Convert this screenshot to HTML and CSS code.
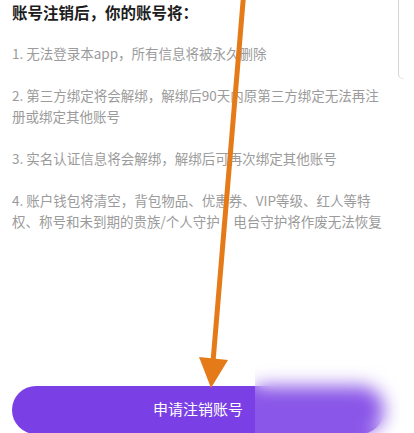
FILE: index.html
```html
<!DOCTYPE html>
<html lang="zh-CN">
<head>
<meta charset="utf-8">
<title>注销账号</title>
<link rel="stylesheet" href="styles.css">
</head>
<body>
<div class="page">
  <h1 class="title">账号注销后，你的账号将：</h1>
  <ol class="rules">
    <li>1. 无法登录本app，所有信息将被永久删除</li>
    <li>2. 第三方绑定将会解绑，解绑后90天内原第三方绑定无法再注册或绑定其他账号</li>
    <li>3. 实名认证信息将会解绑，解绑后可再次绑定其他账号</li>
    <li>4. 账户钱包将清空，背包物品、优惠券、VIP等级、红人等特权、称号和未到期的贵族/个人守护，电台守护将作废无法恢复</li>
  </ol>
  <div class="actions">
    <button class="apply-btn">申请注销账号</button>
  </div>
</div>
<div class="edge-line"></div>
<div class="blur-patch"></div>
<svg class="arrow" width="414" height="433" viewBox="0 0 414 433">
  <line x1="243.5" y1="-4" x2="213" y2="362" stroke="#e47b18" stroke-width="5"/>
  <polygon points="199,357 228,360 211,388" fill="#e47b18"/>
</svg>
</body>
</html>
```
FILE: styles.css
```css
html, body {
  margin: 0;
  padding: 0;
  background: #ffffff;
  overflow: hidden;
}
body {
  width: 414px;
  height: 433px;
  position: relative;
  font-family: "Noto Sans CJK SC", "Noto Sans", sans-serif;
}
.page {
  height: 434px;
  box-sizing: border-box;
  padding: 0 30px 0 12px;
  display: flex;
  flex-direction: column;
}
.title {
  margin: 0;
  font-size: 15.5px;
  line-height: 24px;
  font-weight: 700;
  color: #1c1c1c;
}
.rules {
  list-style: none;
  margin: 19px 0 0;
  padding: 0;
  width: 372px;
  display: flex;
  flex-direction: column;
  gap: 21px;
}
.rules li {
  font-size: 13.5px;
  line-height: 21px;
  color: #9b9b9b;
}
.actions {
  margin-top: auto;
}
.apply-btn {
  display: block;
  width: 372px;
  height: 48px;
  border: none;
  border-radius: 24px;
  background: #7a3fe5;
  color: #ffffff;
  font-family: "Noto Sans CJK SC", "Noto Sans", sans-serif;
  font-size: 15px;
  padding: 0;
  padding-bottom: 4px;
}
.edge-line {
  position: absolute;
  left: 398px;
  top: 0;
  width: 5px;
  height: 78px;
  border-left: 1px solid #d4d4d4;
  border-bottom: 1px solid #e4e4e4;
  border-bottom-left-radius: 5px;
}
.blur-patch {
  position: absolute;
  left: 255px;
  top: 362px;
  width: 159px;
  height: 71px;
  background: rgba(255, 255, 255, 0.12);
  backdrop-filter: blur(9px);
  -webkit-backdrop-filter: blur(9px);
}
.arrow {
  position: absolute;
  left: 0;
  top: 0;
  pointer-events: none;
}
```
